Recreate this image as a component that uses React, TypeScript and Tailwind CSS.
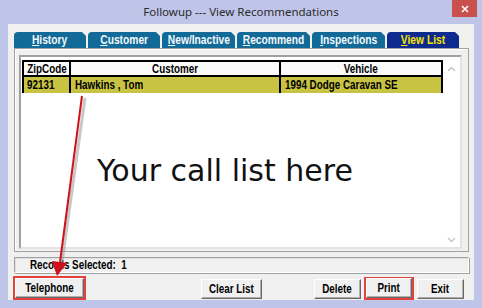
import React from "react";

const tabs = [
  { key: "H", rest: "istory", w: "w-[72px]", active: false },
  { key: "C", rest: "ustomer", w: "w-[72px]", active: false },
  { key: "N", rest: "ew/Inactive", w: "w-[73px]", active: false },
  { key: "R", rest: "ecommend", w: "w-[73px]", active: false },
  { key: "I", rest: "nspections", w: "w-[73px]", active: false },
  { key: "V", rest: "iew List", w: "w-[72px]", active: true },
];

// the old MS Sans Serif bold is tall and narrow: squeeze Arial-width text
function Narrow({ children, left }: { children: React.ReactNode; left?: boolean }) {
  return (
    <span className={left ? "inline-block whitespace-nowrap scale-x-[0.82] origin-left" : "inline-block whitespace-nowrap scale-x-[0.82]"}>
      {children}
    </span>
  );
}

function WinButton({ label, width }: { label: string; width: string }) {
  return (
    <button
      type="button"
      className={`${width} h-[20px] bg-[#f0f0f0] border border-t-white border-l-white border-r-[#696969] border-b-[#696969] shadow-[inset_-1px_-1px_0_#b0b0b0] text-[12px] font-bold text-black leading-none`}
    >
      <Narrow>{label}</Narrow>
    </button>
  );
}

export default function App() {
  return (
    <div className="relative w-[482px] h-[308px] bg-[#bfc4e9] flex flex-col overflow-hidden font-['Liberation_Sans',Arial,sans-serif]">
      {/* title bar */}
      <div className="relative h-[24px] flex items-center justify-center">
        <span className="text-[11.5px] text-[#2b2b2b] font-['Noto_Sans',sans-serif] leading-none">
          Followup --- View Recommendations
        </span>
        <div className="absolute right-[5px] top-0 w-[25px] h-[17px] bg-[#c9504c] flex items-center justify-center">
          <svg width="8" height="8" viewBox="0 0 8 8">
            <path d="M1 1 L7 7 M7 1 L1 7" stroke="white" strokeWidth="1.6" />
          </svg>
        </div>
      </div>

      {/* client area */}
      <div className="mx-[8px] h-[276px] bg-[#f0f0f0] flex flex-col pt-[8px] pl-[6px] pr-[5px]">
        {/* tabs */}
        <div className="flex gap-[2px] h-[16px]">
          {tabs.map((t) => (
            <div
              key={t.key}
              className={`${t.w} h-[16px] rounded-tl-[4px] flex items-center justify-center pt-[1px] text-[12.5px] font-bold leading-none [clip-path:polygon(0_0,calc(100%-4px)_0,100%_4px,100%_100%,0_100%)] ${
                t.active ? "bg-[#0d2b8f] text-[#f5e400]" : "bg-[#116a98] text-[#f4f8fb]"
              }`}
            >
              <span className="inline-block whitespace-nowrap scale-x-[0.82]">
                <span className="underline">{t.key}</span>
                {t.rest}
              </span>
            </div>
          ))}
        </div>

        {/* tab page */}
        <div className="h-[204px] border border-[#a0a0a0] shadow-[inset_1px_1px_0_#ffffff] pt-[6px] pl-[4px] pr-[6px] pb-[2px]">
          <div className="h-full border-2 border-t-[#a0a0a0] border-l-[#a0a0a0] border-r-[#e3e3e3] border-b-[#e3e3e3] bg-white flex pt-[3px] pl-[1px]">
            <div className="flex-1 flex flex-col">
              {/* header */}
              <div className="flex h-[17px] border-2 border-black bg-[#fbfbfb] text-[12px] font-bold text-black leading-none">
                <div className="w-[47px] flex items-center justify-center border-r-2 border-black"><Narrow>ZipCode</Narrow></div>
                <div className="w-[210px] flex items-center justify-center border-r-2 border-black"><Narrow>Customer</Narrow></div>
                <div className="flex-1 flex items-center justify-center"><Narrow>Vehicle</Narrow></div>
              </div>
              {/* data row */}
              <div className="flex h-[16px] bg-[#c8c343] text-[12px] font-bold text-black leading-none border-l-2 border-r-2 border-black">
                <div className="w-[47px] flex items-center pl-[3px] border-r-2 border-black"><Narrow left>92131</Narrow></div>
                <div className="w-[210px] flex items-center pl-[4px] border-r-2 border-black"><Narrow left>Hawkins , Tom</Narrow></div>
                <div className="flex-1 flex items-center pl-[4px]"><Narrow left>1994 Dodge Caravan SE</Narrow></div>
              </div>
              <div className="flex-1 pt-[61px] pl-[75px]">
                <span className="text-[30px] text-[#111] font-['DejaVu_Sans',Verdana,sans-serif] leading-[1.16]">
                  Your call list here
                </span>
              </div>
            </div>
            {/* scrollbar */}
            <div className="w-[17px] flex flex-col items-center justify-between pt-[6px] pb-[4px]">
              <svg width="9" height="6" viewBox="0 0 9 6">
                <path d="M1 5 L4.5 1.5 L8 5" stroke="#c4c4c4" strokeWidth="1.4" fill="none" />
              </svg>
              <svg width="9" height="6" viewBox="0 0 9 6">
                <path d="M1 1 L4.5 4.5 L8 1" stroke="#c4c4c4" strokeWidth="1.4" fill="none" />
              </svg>
            </div>
          </div>
        </div>

        {/* records selected */}
        <div className="mt-[5px] h-[16px] border border-t-[#a0a0a0] border-l-[#a0a0a0] border-r-white border-b-white shadow-[inset_1px_1px_0_#e0e0e0,1px_1px_0_#a0a0a0] flex items-center pl-[15px] text-[12px] font-bold text-black leading-none">
          <Narrow left>Records Selected:&nbsp;&nbsp;1</Narrow>
        </div>

        {/* buttons */}
        <div className="mt-[3px] h-[24px] flex items-center -ml-[1px]">
          <div className="border-2 border-[#e4433b] w-[73px] h-[24px] flex items-center justify-center">
            <WinButton label="Telephone" width="w-[69px]" />
          </div>
          <div className="ml-[115px]">
            <WinButton label="Clear List" width="w-[61px]" />
          </div>
          <div className="ml-[52px]">
            <WinButton label="Delete" width="w-[47px]" />
          </div>
          <div className="ml-[3px] border-2 border-[#e4433b] w-[50px] h-[23px] flex items-center justify-center">
            <WinButton label="Print" width="w-[46px]" />
          </div>
          <div className="ml-[3px]">
            <WinButton label="Exit" width="w-[47px]" />
          </div>
        </div>
      </div>

      {/* annotation arrow */}
      <svg className="absolute left-0 top-0 pointer-events-none" width="482" height="308" viewBox="0 0 482 308">
        <line x1="85" y1="98" x2="62" y2="262" stroke="#9a9a9a" strokeOpacity="0.55" strokeWidth="3" />
        <line x1="82" y1="96" x2="60" y2="262" stroke="#d0101a" strokeWidth="2" />
        <polygon points="52,261 67,263 57,276" fill="#d0101a" />
      </svg>
    </div>
  );
}
